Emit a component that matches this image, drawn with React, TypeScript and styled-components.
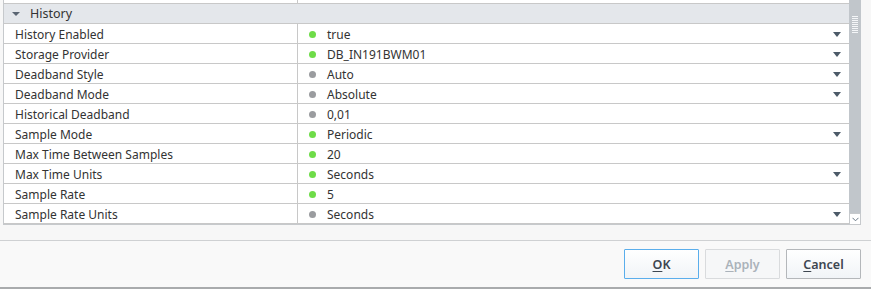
import React from "react";
import styled, { createGlobalStyle } from "styled-components";

const Global = createGlobalStyle`
  html, body { margin: 0; padding: 0; background: #f7f7f7; }
  body { font-family: "Noto Sans", "Open Sans", sans-serif; }
`;

const Page = styled.div`
  width: 871px;
  height: 289px;
  display: flex;
  flex-direction: column;
  background: #f7f7f7;
  overflow: hidden;
`;

const TableArea = styled.div`
  display: flex;
  height: 225px;
  padding-left: 3px;
  padding-right: 10px;
`;

const Table = styled.div`
  flex: 1;
  display: flex;
  flex-direction: column;
  background: #fff;
  border-left: 1px solid #c6c9cc;
  border-bottom: 1px solid #c6c9cc;
`;

const TopRow = styled.div`
  height: 3px;
  border-bottom: 1px solid #c8c8c8;
  display: grid;
  grid-template-columns: 294px 1fr;
`;

const TopCell = styled.div`
  border-right: 1px solid #c8c8c8;
`;

const Header = styled.div`
  height: 19px;
  border-bottom: 1px solid #c8c8c8;
  background: #e4e7eb;
  display: flex;
  align-items: center;
  padding-left: 8px;
  gap: 10px;
  font-size: 12.5px;
  color: #333;
`;

const Caret = styled.span`
  width: 0;
  height: 0;
  border-left: 4px solid transparent;
  border-right: 4px solid transparent;
  border-top: 4px solid #5a6572;
  margin-top: 1px;
`;

const Row = styled.div`
  height: 19px;
  border-bottom: 1px solid #c8c8c8;
  display: grid;
  grid-template-columns: 294px 1fr;
  font-size: 12px;
  color: #333;
`;

const Label = styled.div`
  border-right: 1px solid #c8c8c8;
  padding-left: 11px;
  display: flex;
  align-items: center;
  padding-top: 1px;
`;

const Value = styled.div`
  display: flex;
  align-items: center;
  padding-left: 11px;
  padding-right: 8px;
  padding-top: 2px;
`;

const Dot = styled.span<{ $on: boolean }>`
  width: 7px;
  height: 7px;
  border-radius: 50%;
  background: ${(p) => (p.$on ? "#6edc48" : "#9a9c9f")};
  margin-right: 11px;
  flex: none;
`;

const ValueText = styled.span`
  flex: 1;
  margin-top: -1px;
`;

const Arrow = styled.span`
  width: 0;
  height: 0;
  border-left: 4px solid transparent;
  border-right: 4px solid transparent;
  border-top: 5px solid #4c5a68;
`;

const Scrollbar = styled.div`
  width: 12px;
  background: #c1c6cb;
  display: flex;
  flex-direction: column;
  align-items: center;
`;

const Grip = styled.div`
  margin-top: 16px;
  width: 6px;
  height: 17px;
  background: repeating-linear-gradient(
    to bottom,
    #f4f6f8 0px,
    #f4f6f8 1px,
    #c1c6cb 1px,
    #c1c6cb 2px
  );
`;

const ScrollSpacer = styled.div`
  flex: 1;
`;

const ScrollButton = styled.div`
  width: 12px;
  height: 12px;
  box-sizing: border-box;
  background: #fff;
  border: 1px solid #c6c9cc;
  display: flex;
  align-items: center;
  justify-content: center;
`;

const Gap = styled.div`
  height: 15px;
`;

const Footer = styled.div`
  flex: 1;
  border-top: 1px solid #cfd1d3;
  border-bottom: 2px solid #a9abad;
  background: #f9f9f9;
  display: flex;
  justify-content: flex-end;
  align-items: flex-start;
  padding-top: 8px;
  padding-right: 10px;
  gap: 6px;
`;

const Button = styled.button<{ $variant: "focus" | "disabled" | "normal" }>`
  width: 75px;
  height: 30px;
  box-sizing: border-box;
  font-family: "Noto Sans", "Open Sans", sans-serif;
  font-size: 12.5px;
  font-weight: 600;
  border-radius: 1px;
  padding: 0;
  background: ${(p) =>
    p.$variant === "disabled"
      ? "#f6f7f8"
      : "linear-gradient(to bottom, #ffffff, #f1f4f7)"};
  border: 1px solid
    ${(p) =>
      p.$variant === "focus"
        ? "#5aaeec"
        : p.$variant === "disabled"
        ? "#d9dbdd"
        : "#b4b7ba"};
  color: ${(p) => (p.$variant === "disabled" ? "#aab2ba" : "#3d4650")};
  u { text-decoration: underline; text-underline-offset: 2px; }
`;

const rows: { label: string; value: string; on: boolean; dropdown: boolean }[] = [
  { label: "History Enabled", value: "true", on: true, dropdown: true },
  { label: "Storage Provider", value: "DB_IN191BWM01", on: true, dropdown: true },
  { label: "Deadband Style", value: "Auto", on: false, dropdown: true },
  { label: "Deadband Mode", value: "Absolute", on: false, dropdown: true },
  { label: "Historical Deadband", value: "0,01", on: false, dropdown: false },
  { label: "Sample Mode", value: "Periodic", on: true, dropdown: true },
  { label: "Max Time Between Samples", value: "20", on: true, dropdown: false },
  { label: "Max Time Units", value: "Seconds", on: true, dropdown: true },
  { label: "Sample Rate", value: "5", on: true, dropdown: false },
  { label: "Sample Rate Units", value: "Seconds", on: false, dropdown: true },
];

export default function App() {
  return (
    <Page>
      <Global />
      <TableArea>
        <Table>
          <TopRow>
            <TopCell />
            <div />
          </TopRow>
          <Header>
            <Caret />
            <span>History</span>
          </Header>
          {rows.map((r) => (
            <Row key={r.label}>
              <Label>{r.label}</Label>
              <Value>
                <Dot $on={r.on} />
                <ValueText>{r.value}</ValueText>
                {r.dropdown && <Arrow />}
              </Value>
            </Row>
          ))}
        </Table>
        <Scrollbar>
          <Grip />
          <ScrollSpacer />
          <ScrollButton>
            <svg width="7" height="5" viewBox="0 0 7 5">
              <path d="M0.5 0.8 L3.5 3.8 L6.5 0.8" fill="none" stroke="#6a7886" strokeWidth="1" />
            </svg>
          </ScrollButton>
        </Scrollbar>
      </TableArea>
      <Gap />
      <Footer>
        <Button $variant="focus">
          <u>O</u>K
        </Button>
        <Button $variant="disabled">
          <u>A</u>pply
        </Button>
        <Button $variant="normal">
          <u>C</u>ancel
        </Button>
      </Footer>
    </Page>
  );
}
